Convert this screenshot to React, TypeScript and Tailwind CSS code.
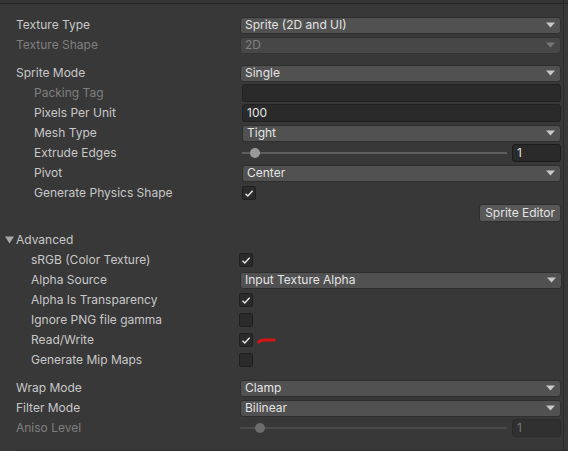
import type { ReactNode } from "react"

const font = { fontFamily: "Inter, 'Noto Sans', sans-serif" }

function Arrow({ dim }: { dim?: boolean }) {
  return (
    <svg width="9" height="6" viewBox="0 0 9 6" className="shrink-0">
      <path d="M0 0.5 H9 L4.5 5.5 Z" fill={dim ? "#777777" : "#c8c8c8"} />
    </svg>
  )
}

function Dropdown({ value, dim }: { value: string; dim?: boolean }) {
  return (
    <div
      className={`flex h-[17px] w-full items-center justify-between rounded-[3px] border pl-1 pr-[5px] ${
        dim ? "border-[#333333] bg-[#474747] text-[#808080]" : "border-[#2e2e2e] bg-[#515151] text-[#e4e4e4]"
      }`}
    >
      <span className="leading-none">{value}</span>
      <Arrow dim={dim} />
    </div>
  )
}

function Field({ value }: { value?: string }) {
  return (
    <div className="flex h-[18px] w-full items-center rounded-[3px] border border-[#212121] bg-[#2a2a2a] pl-1 text-[#e4e4e4]">
      {value}
    </div>
  )
}

function Check({ on }: { on?: boolean }) {
  return (
    <div className="flex h-[14px] w-[14px] items-center justify-center rounded-[2px] border border-[#1f1f1f] bg-[#2b2b2b]">
      {on && (
        <svg width="10" height="9" viewBox="0 0 10 9">
          <path d="M1.5 4.8 L3.8 7 L8.6 1.8" stroke="#e8e8e8" strokeWidth="1.4" fill="none" />
        </svg>
      )}
    </div>
  )
}

function Slider({ knob, dim }: { knob: number; dim?: boolean }) {
  return (
    <div className="flex w-full items-center gap-[5px]">
      <div className="relative h-[10px] flex-1">
        <div className={`absolute left-0 right-0 top-[4px] h-[2px] ${dim ? "bg-[#4a4a4a]" : "bg-[#5e5e5e]"}`} />
        <div
          className={`absolute top-0 h-[10px] w-[10px] rounded-full ${dim ? "bg-[#6c6c6c]" : "bg-[#999999]"}`}
          style={{ left: knob }}
        />
      </div>
      <div
        className={`flex h-[18px] w-[49px] items-center rounded-[3px] border pl-1 ${
          dim ? "border-[#2a2a2a] bg-[#303030] text-[#777777]" : "border-[#1c1c1c] bg-[#2a2a2a] text-[#e4e4e4]"
        }`}
      >
        1
      </div>
    </div>
  )
}

function Row({
  label,
  pl = "pl-4",
  dim,
  shift = "",
  children,
}: {
  label: string
  pl?: string
  dim?: boolean
  shift?: string
  children?: ReactNode
}) {
  return (
    <div className="flex h-5 items-center">
      <div className={`w-[240px] shrink-0 ${pl} ${dim ? "text-[#7f7f7f]" : "text-[#c8c8c8]"}`}>{label}</div>
      <div className={`flex flex-1 items-center pr-[7px] ${shift}`}>{children}</div>
    </div>
  )
}

export default function App() {
  return (
    <div className="relative h-[451px] w-[568px] overflow-hidden bg-[#383838] text-[12px]" style={font}>
      <div className="h-[3px] bg-[#353535]" />
      <div className="h-px bg-[#232323]" />
      <div className="absolute right-[4px] top-0 h-full w-px bg-[#2b2b2b]" />

      <div className="flex flex-col pt-[11px]">
        <Row label="Texture Type">
          <Dropdown value="Sprite (2D and UI)" />
        </Row>
        <Row label="Texture Shape" dim>
          <Dropdown value="2D" dim />
        </Row>

        <div className="h-2" />

        <Row label="Sprite Mode">
          <Dropdown value="Single" />
        </Row>
        <Row label="Packing Tag" pl="pl-[34px]" dim shift="ml-[2px]">
          <Field />
        </Row>
        <Row label="Pixels Per Unit" pl="pl-[34px]" shift="ml-[2px]">
          <Field value="100" />
        </Row>
        <Row label="Mesh Type" pl="pl-[34px]" shift="ml-[2px]">
          <Dropdown value="Tight" />
        </Row>
        <Row label="Extrude Edges" pl="pl-[34px]" shift="ml-[2px]">
          <Slider knob={8} />
        </Row>
        <Row label="Pivot" pl="pl-[34px]" shift="ml-[2px]">
          <Dropdown value="Center" />
        </Row>
        <Row label="Generate Physics Shape" pl="pl-[34px]" shift="ml-[2px]">
          <Check on />
        </Row>
        <div className="flex h-5 items-center justify-end pr-[7px]">
          <button className="h-[18px] rounded-[3px] border border-[#2e2e2e] bg-[#585858] px-[5px] leading-none text-[#e4e4e4]">
            Sprite Editor
          </button>
        </div>

        <div className="h-[7px]" />

        <div className="flex h-5 items-center text-[#c8c8c8]">
          <svg width="9" height="8" viewBox="0 0 9 8" className="ml-[5px] mr-[2px]">
            <path d="M0 0.5 H9 L4.5 7.5 Z" fill="#a8a8a8" />
          </svg>
          Advanced
        </div>
        <Row label="sRGB (Color Texture)" pl="pl-[31px]" shift="ml-[-1px]">
          <Check on />
        </Row>
        <Row label="Alpha Source" pl="pl-[31px]" shift="mr-[-1px]">
          <Dropdown value="Input Texture Alpha" />
        </Row>
        <Row label="Alpha Is Transparency" pl="pl-[31px]" shift="ml-[-1px]">
          <Check on />
        </Row>
        <Row label="Ignore PNG file gamma" pl="pl-[31px]" shift="ml-[-1px]">
          <Check />
        </Row>
        <Row label="Read/Write" pl="pl-[31px]" shift="ml-[-1px]">
          <Check on />
          <svg width="20" height="6" viewBox="0 0 20 6" className="ml-[4px] mt-[1px]">
            <path d="M1.8 4 Q3 2.2 9 2 L17 1.9" stroke="#d81414" strokeWidth="3" strokeLinecap="round" fill="none" />
          </svg>
        </Row>
        <Row label="Generate Mip Maps" pl="pl-[31px]" shift="ml-[-1px]">
          <Check />
        </Row>

        <div className="h-2" />

        <Row label="Wrap Mode">
          <Dropdown value="Clamp" />
        </Row>
        <Row label="Filter Mode">
          <Dropdown value="Bilinear" />
        </Row>
        <Row label="Aniso Level" dim>
          <Slider knob={15} dim />
        </Row>
      </div>

      <div className="absolute bottom-0 left-4 right-0 h-px bg-[#2a2a2a]" />
    </div>
  )
}
